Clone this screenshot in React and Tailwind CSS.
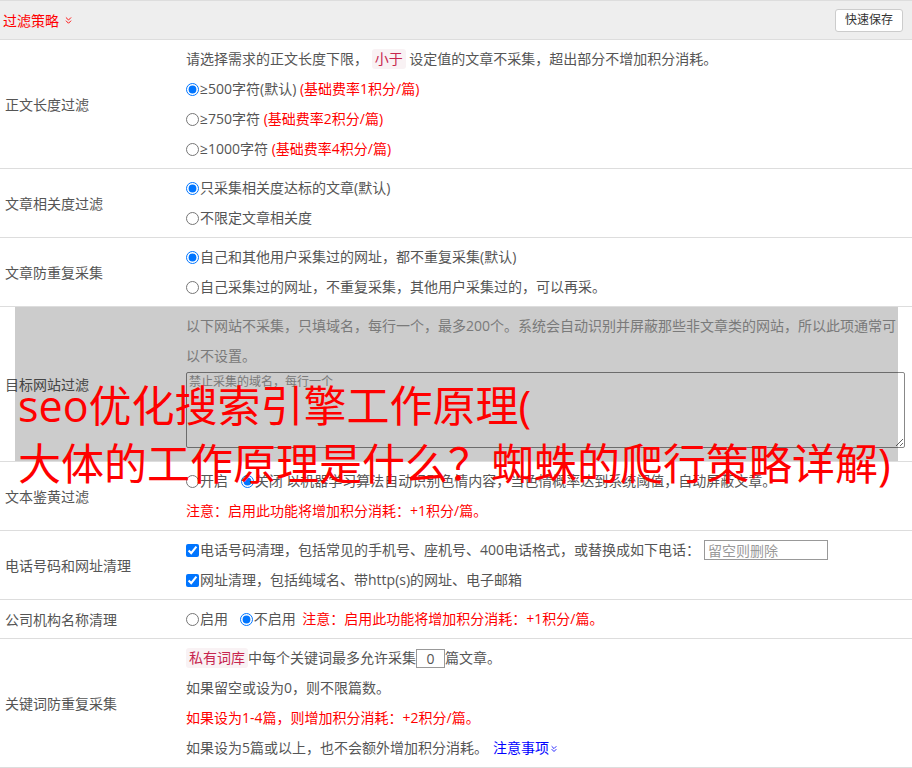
import React from "react";
import { ChevronsDown } from "lucide-react";

const Tag = ({ children }) => (
  <span className="inline-block rounded-[3px] bg-[#f9f2f4] px-[3px] leading-[20px] text-[#c7254e]">
    {children}
  </span>
);

const Radio = ({ checked, name }) => (
  <input
    type="radio"
    name={name}
    defaultChecked={checked}
    className="m-0 mr-[1px] h-[13px] w-[13px] align-[-2px]"
  />
);

const Check = () => (
  <input
    type="checkbox"
    defaultChecked
    className="m-0 mr-[1px] h-[13px] w-[13px] align-[-2px]"
  />
);

const Row = ({ label, children, overlay }) => (
  <div className="relative flex border-b border-[#dddddd]">
    <div className="flex w-[186px] shrink-0 items-center pl-[5px]">{label}</div>
    <div className="min-w-0 flex-1 pr-[7px] pt-1 pb-1 leading-[30px]">{children}</div>
    {overlay && (
      <div className="pointer-events-none absolute top-0 bottom-0 left-[15px] right-[14px] bg-black/20" />
    )}
  </div>
);

const App = () => {
  return (
    <div
      className="relative h-[768px] w-[912px] overflow-hidden bg-white text-[14px] text-[#555555]"
      style={{ fontFamily: '"Open Sans", "Noto Sans CJK SC", sans-serif' }}
    >
      <div className="flex h-[40px] items-center justify-between border-y border-[#dddddd] bg-[#eeeeee] pl-[3px] pr-[9px]">
        <div className="flex items-center text-[#ff0000]">
          过滤策略
          <ChevronsDown size={11} strokeWidth={2} className="ml-[4px] mt-[1px]" />
        </div>
        <button className="h-[23px] rounded-[3px] border border-[#cccccc] bg-white px-[9px] text-[12px] leading-[20px] text-[#333333]">
          快速保存
        </button>
      </div>

      <Row label="正文长度过滤">
        <div>
          请选择需求的正文长度下限， <Tag>小于</Tag> 设定值的文章不采集，超出部分不增加积分消耗。
        </div>
        <div>
          <Radio name="len" checked />≥500字符(默认) <span className="text-[#ff0000]">(基础费率1积分/篇)</span>
        </div>
        <div>
          <Radio name="len" />≥750字符 <span className="text-[#ff0000]">(基础费率2积分/篇)</span>
        </div>
        <div>
          <Radio name="len" />≥1000字符 <span className="text-[#ff0000]">(基础费率4积分/篇)</span>
        </div>
      </Row>

      <Row label="文章相关度过滤">
        <div>
          <Radio name="rel" checked />只采集相关度达标的文章(默认)
        </div>
        <div>
          <Radio name="rel" />不限定文章相关度
        </div>
      </Row>

      <Row label="文章防重复采集">
        <div>
          <Radio name="dup" checked />自己和其他用户采集过的网址，都不重复采集(默认)
        </div>
        <div>
          <Radio name="dup" />自己采集过的网址，不重复采集，其他用户采集过的，可以再采。
        </div>
      </Row>

      <Row label="目标网站过滤" overlay>
        <div className="whitespace-nowrap text-[#999999]">
          以下网站不采集，只填域名，每行一个，最多200个。系统会自动识别并屏蔽那些非文章类的网站，所以此项通常可
          <br />
          以不设置。
        </div>
        <textarea
          placeholder="禁止采集的域名，每行一个"
          className="mt-[1px] mb-[9px] block h-[76px] w-full rounded-[2px] border border-[#888888] bg-white px-[2px] py-0 text-[12px] leading-[18px] placeholder:text-[#999999]"
        />
      </Row>

      <Row label="文本鉴黄过滤">
        <div className="whitespace-nowrap">
          <Radio name="porn" />开启 <span className="ml-[9px]" />
          <Radio name="porn" checked />关闭 以机器学习算法自动识别色情内容，当色情概率达到系统阈值，自动屏蔽文章。
        </div>
        <div className="text-[#ff0000]">注意：启用此功能将增加积分消耗：+1积分/篇。</div>
      </Row>

      <Row label="电话号码和网址清理">
        <div className="flex items-center whitespace-nowrap">
          <Check />
          电话号码清理，包括常见的手机号、座机号、400电话格式，或替换成如下电话：
          <input
            placeholder="留空则删除"
            className="ml-[4px] h-[20px] w-[124px] border border-[#999999] px-[3px] text-[14px] leading-[18px] placeholder:text-[#999999]"
          />
        </div>
        <div>
          <Check />
          网址清理，包括纯域名、带http(s)的网址、电子邮箱
        </div>
      </Row>

      <Row label="公司机构名称清理">
        <div>
          <Radio name="org" />启用 <span className="ml-[8px]" />
          <Radio name="org" checked />不启用 <span className="ml-[3px] text-[#ff0000]">注意：启用此功能将增加积分消耗：+1积分/篇。</span>
        </div>
      </Row>

      <Row label="关键词防重复采集">
        <div className="flex items-center">
          <Tag>私有词库</Tag>
          中每个关键词最多允许采集
          <input
            defaultValue="0"
            className="h-[19px] w-[29px] border border-[#999999] text-center text-[14px] leading-[17px]"
          />
          篇文章。
        </div>
        <div>如果留空或设为0，则不限篇数。</div>
        <div className="text-[#ff0000]">如果设为1-4篇，则增加积分消耗：+2积分/篇。</div>
        <div className="flex items-center">
          如果设为5篇或以上，也不会额外增加积分消耗。
          <span className="ml-[5px] flex items-center text-[#0000ff]">
            注意事项
            <ChevronsDown size={10} strokeWidth={2} className="mt-[2px]" />
          </span>
        </div>
      </Row>

      <div className="pointer-events-none absolute left-[18px] top-[377px] text-[43px] leading-[58px] text-[#ff0000]">
        seo优化搜索引擎工作原理(
        <br />
        大体的工作原理是什么？蜘蛛的爬行策略详解)
      </div>
    </div>
  );
};

export default App;
